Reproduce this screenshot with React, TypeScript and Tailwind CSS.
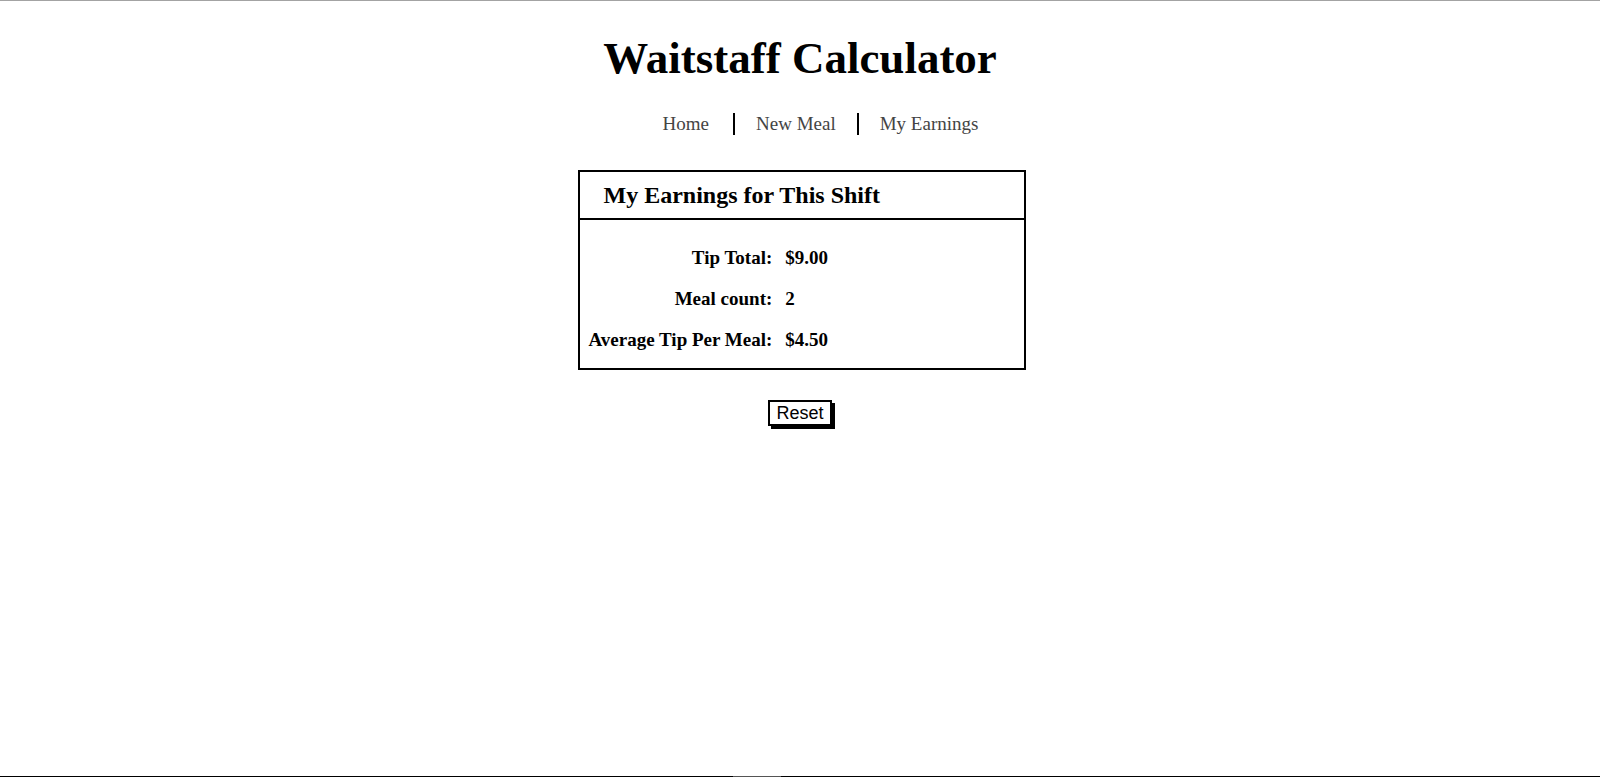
import React from "react";

const rows = [
  { label: "Tip Total:", value: "$9.00" },
  { label: "Meal count:", value: "2" },
  { label: "Average Tip Per Meal:", value: "$4.50" },
];

const links = ["Home", "New Meal", "My Earnings"];

export default function App() {
  return (
    <div className="relative flex h-[777px] flex-col items-center border-t border-[#a3a3a3] border-b border-b-black bg-white font-['Liberation_Serif',serif] text-black">
      <h1 className="mt-[30px] text-[45px] font-bold leading-[54px]">Waitstaff Calculator</h1>

      <nav className="mt-[28px]">
        <ul className="flex items-center pl-[40px] text-[19px] text-[#444]">
          {links.map((link, i) => (
            <li
              key={link}
              className={`leading-[22px] ${i === 0 ? "pl-[22px] pr-[24px]" : "px-[21px]"} ${i > 0 ? "border-l-2 border-black" : ""}`}
            >
              {link}
            </li>
          ))}
        </ul>
      </nav>

      <section className="mt-[35px] ml-[3px] w-[448px] border-2 border-black">
        <h2 className="border-b-2 border-black py-[10px] pl-[24px] text-[24px] font-bold leading-[26px]">
          My Earnings for This Shift
        </h2>
        <div className="grid grid-cols-[auto_1fr] gap-x-[13px] gap-y-[18px] pt-[26px] pb-[17px] pl-[9px] text-[19px] font-bold leading-[23px]">
          {rows.map((row) => (
            <React.Fragment key={row.label}>
              <span className="text-right">{row.label}</span>
              <span>{row.value}</span>
            </React.Fragment>
          ))}
        </div>
      </section>

      <button className="mt-[30px] border-2 border-black px-[6px] font-['Liberation_Sans',sans-serif] text-[18px] leading-[22px] shadow-[3px_3px_0_0_#000]">
        Reset
      </button>

      <div className="absolute bottom-[-1px] left-[733px] h-px w-[48px] bg-[#555]" />
    </div>
  );
}
